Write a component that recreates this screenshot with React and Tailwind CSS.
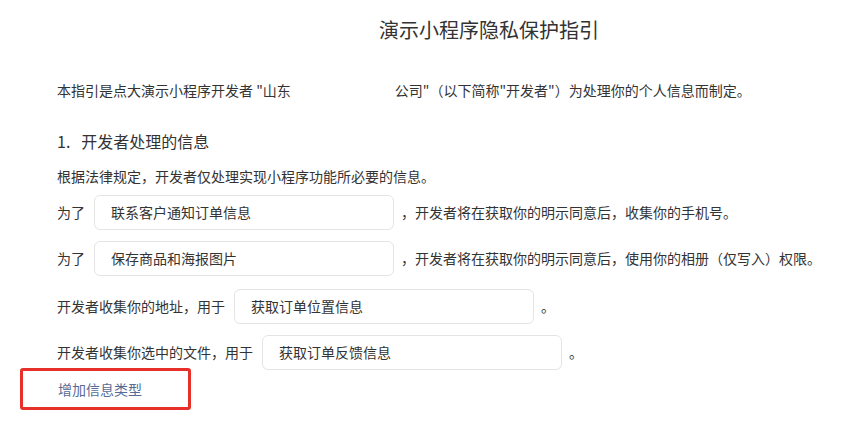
export default function App() {
  const font = { fontFamily: '"Noto Sans CJK SC", "Noto Sans", sans-serif' };

  return (
    <div style={font} className="w-[868px] h-[428px] bg-white text-[#333] overflow-hidden">
      {/* title sits right of the page centre, as in the mini program editor */}
      <div className="pt-[16px] pl-[110px] text-center text-[20px] leading-[28px] text-[#333]">
        演示小程序隐私保护指引
      </div>

      <div className="pl-[57px]">
        <p className="mt-[35px] text-[14px] leading-[22px] whitespace-nowrap">
          本指引是点大演示小程序开发者 "山东
          <span className="inline-block w-[104px]"></span>
          公司"（以下简称"开发者"）为处理你的个人信息而制定。
        </p>

        <h2 className="mt-[28px] text-[16px] leading-[24px] font-normal">
          1.<span className="ml-[11px]">开发者处理的信息</span>
        </h2>

        <p className="mt-[12px] text-[14px] leading-[22px]">
          根据法律规定，开发者仅处理实现小程序功能所必要的信息。
        </p>

        <div className="mt-[8px] flex items-center text-[14px] whitespace-nowrap">
          <span>为了</span>
          <div className="ml-[9px] mr-[7px] w-[300px] h-[35px] border border-[#e4e4e4] rounded-[6px] pl-[16px] flex items-center">
            联系客户通知订单信息
          </div>
          <span>，开发者将在获取你的明示同意后，收集你的手机号。</span>
        </div>

        <div className="mt-[11px] flex items-center text-[14px] whitespace-nowrap">
          <span>为了</span>
          <div className="ml-[9px] mr-[7px] w-[300px] h-[35px] border border-[#e4e4e4] rounded-[6px] pl-[16px] flex items-center">
            保存商品和海报图片
          </div>
          <span>，开发者将在获取你的明示同意后，使用你的相册（仅写入）权限。</span>
        </div>

        <div className="mt-[13px] flex items-center text-[14px] whitespace-nowrap">
          <span>开发者收集你的地址，用于</span>
          <div className="ml-[9px] mr-[7px] w-[300px] h-[35px] border border-[#e4e4e4] rounded-[6px] pl-[16px] flex items-center">
            获取订单位置信息
          </div>
          <span>。</span>
        </div>

        <div className="mt-[11px] flex items-center text-[14px] whitespace-nowrap">
          <span>开发者收集你选中的文件，用于</span>
          <div className="ml-[9px] mr-[7px] w-[300px] h-[35px] border border-[#e4e4e4] rounded-[6px] pl-[16px] flex items-center">
            获取订单反馈信息
          </div>
          <span>。</span>
        </div>
      </div>

      <div className="mt-[-2px] ml-[20px] w-[171px] h-[42px] border-[3px] border-[#e8302a] rounded-[3px] pl-[35px] flex items-center">
        <span className="text-[14px] text-[#576b95]">增加信息类型</span>
      </div>
    </div>
  );
}
